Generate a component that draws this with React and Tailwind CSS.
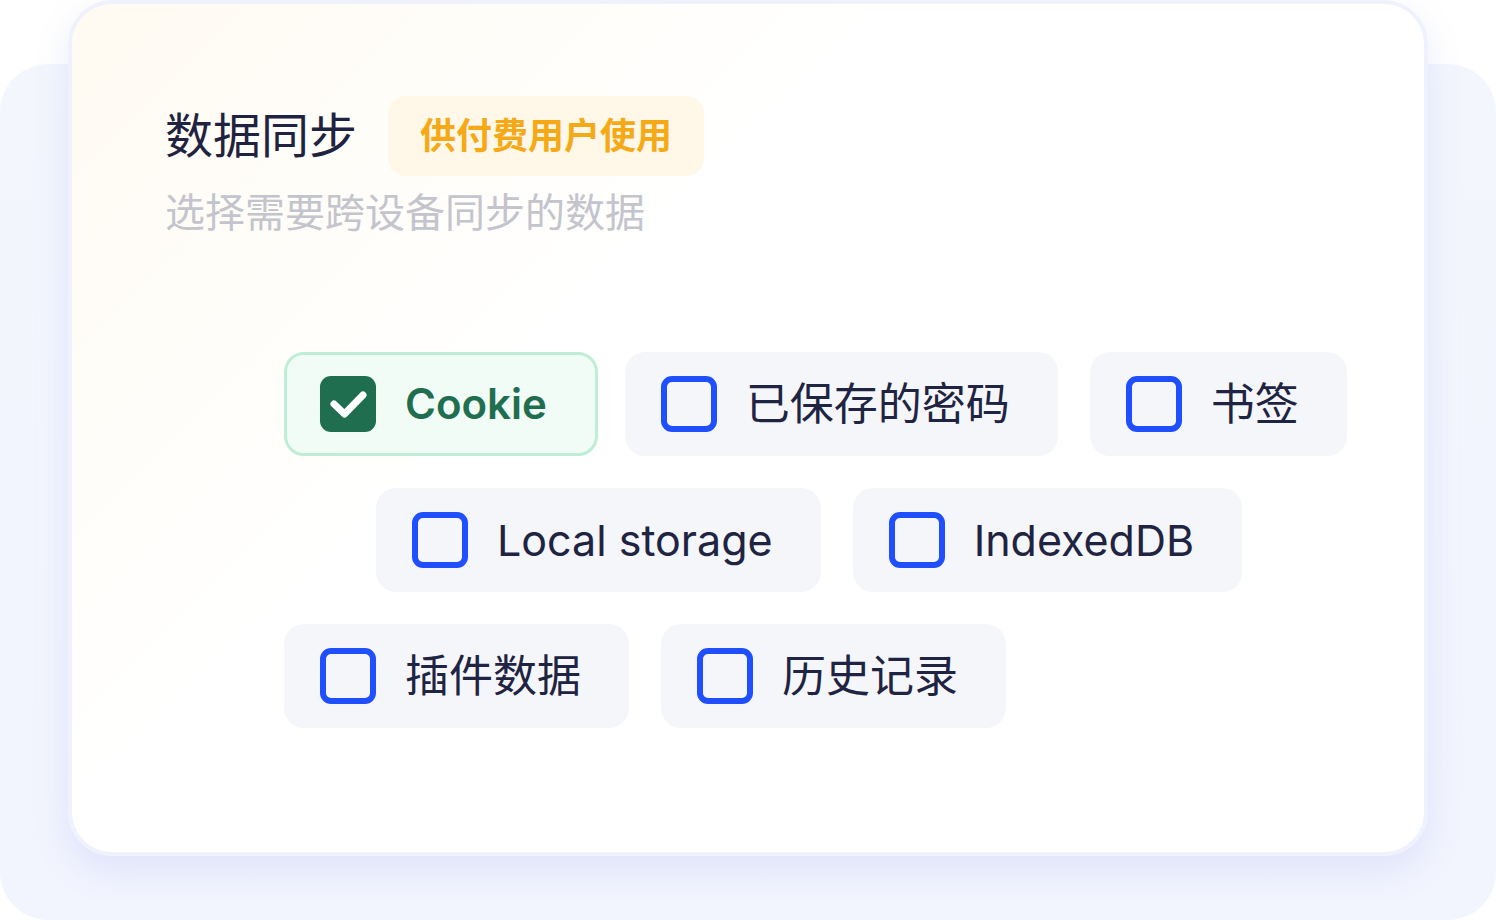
import React, { useState } from "react";

const fontStack =
  "Inter, 'Noto Sans CJK SC', 'Noto Sans', sans-serif";

const rows = [
  { offset: "ml-[119px]", items: ["cookie", "passwords", "bookmarks"] },
  { offset: "ml-[211px]", items: ["localStorage", "indexedDB"] },
  { offset: "ml-[119px]", items: ["extensions", "history"] },
];

const labels = {
  cookie: { text: "Cookie" },
  passwords: { text: "已保存的密码", cjk: true },
  bookmarks: { text: "书签", cjk: true },
  localStorage: { text: "Local storage" },
  indexedDB: { text: "IndexedDB" },
  extensions: { text: "插件数据", cjk: true },
  history: { text: "历史记录", cjk: true },
};

const CheckBox = ({ checked }) =>
  checked ? (
    <span className="flex h-[56px] w-[56px] shrink-0 items-center justify-center rounded-[11px] bg-[#1f6e50]">
      <svg viewBox="0 0 56 56" className="h-[56px] w-[56px]">
        <path
          d="M14 28 L24.5 38 L43 19"
          fill="none"
          stroke="#ffffff"
          strokeWidth="7"
          strokeLinecap="round"
          strokeLinejoin="round"
        />
      </svg>
    </span>
  ) : (
    <span className="block h-[56px] w-[56px] shrink-0 rounded-[11px] border-[6px] border-[#1f4fff]" />
  );

const Chip = ({ id, checked, onToggle }) => {
  const label = labels[id];
  const size = label.cjk ? "text-[44px]" : checked ? "text-[42px]" : "text-[43px]";
  return (
    <button
      onClick={onToggle}
      className={`flex h-[104px] items-center gap-[29px] rounded-[20px] pr-[48px] ${
        checked
          ? "-mr-[5px] border-[3px] border-[#bfeed6] bg-[#f1fcf6] pl-[33px]"
          : "bg-[#f5f6f9] pl-[36px]"
      }`}
    >
      <CheckBox checked={checked} />
      <span
        className={`leading-none ${size} ${
          checked ? "font-semibold text-[#1f6e50]" : "text-[#1e2442]"
        }`}
      >
        {label.text}
      </span>
    </button>
  );
};

export default function App() {
  const [selected, setSelected] = useState({ cookie: true });

  const toggle = (id) => setSelected((s) => ({ ...s, [id]: !s[id] }));

  return (
    <div
      className="relative h-[920px] w-[1496px] overflow-hidden bg-white"
      style={{ fontFamily: fontStack }}
    >
      {/* back plate */}
      <div className="absolute left-0 top-[64px] h-[856px] w-[1496px] rounded-[48px] bg-[linear-gradient(180deg,#f4f6fe_0%,#f2f4fe_100%)]" />

      {/* card */}
      <div className="relative ml-[68px] h-[856px] w-[1360px] rounded-[44px] border-[4px] border-[#eff2fd] bg-[linear-gradient(135deg,#fffbf2_0%,#ffffff_38%,#ffffff_100%)] pl-[93px] pt-[92px] shadow-[0_14px_36px_rgba(96,116,220,0.13)]">
        <div className="flex items-center">
          <h2 className="text-[48px] font-normal leading-none text-[#1f2340]">
            数据同步
          </h2>
          <span className="ml-[31px] flex h-[80px] items-center rounded-[18px] bg-[#fff7e8] px-[32px] text-[36px] font-bold text-[#f6a917]">
            供付费用户使用
          </span>
        </div>
        <p className="mt-[9px] text-[40px] leading-[56px] text-[#c3c4cc]">
          选择需要跨设备同步的数据
        </p>

        <div className="mt-[111px] flex flex-col gap-[32px]">
          {rows.map((row, i) => (
            <div key={i} className={`flex gap-[32px] ${row.offset}`}>
              {row.items.map((id) => (
                <Chip
                  key={id}
                  id={id}
                  checked={!!selected[id]}
                  onToggle={() => toggle(id)}
                />
              ))}
            </div>
          ))}
        </div>
      </div>
    </div>
  );
}
